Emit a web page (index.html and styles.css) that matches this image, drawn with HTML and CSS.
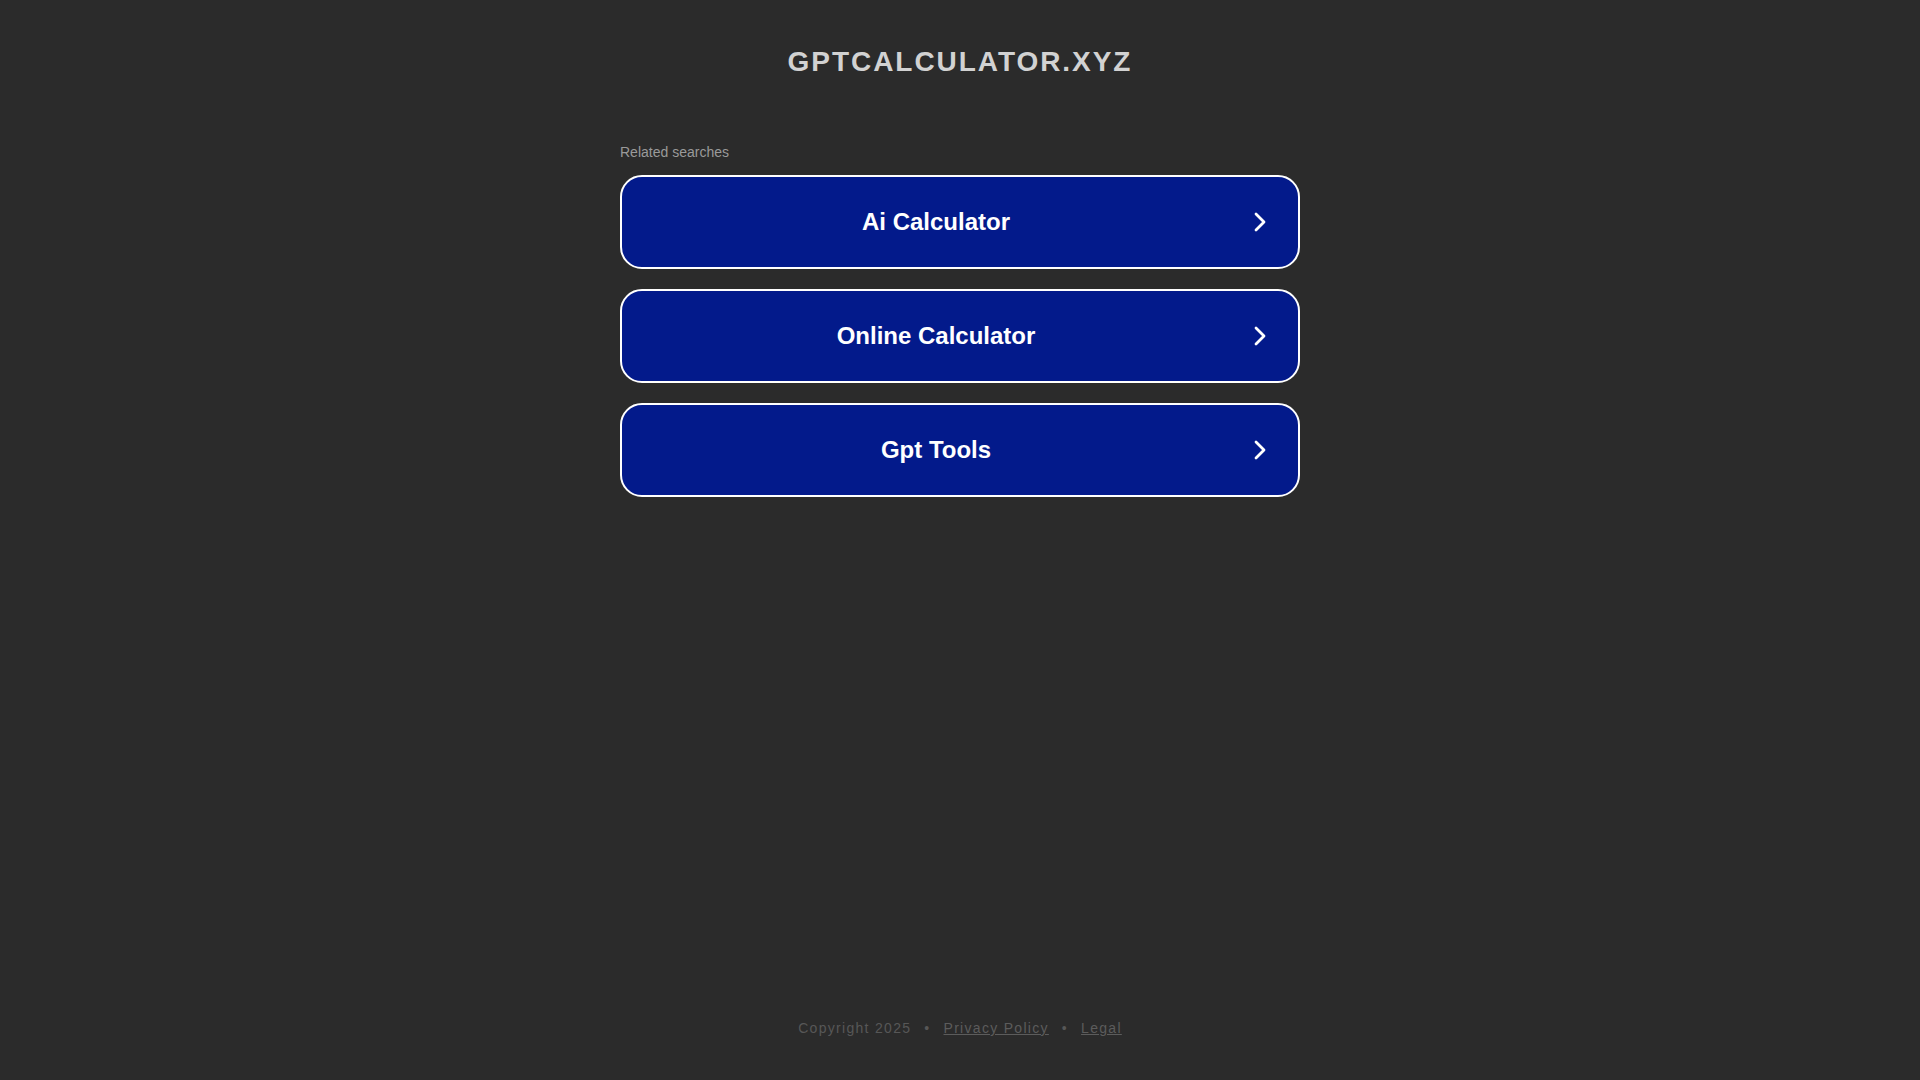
FILE: index.html
```html
<!DOCTYPE html>
<html lang="en">
<head>
<meta charset="utf-8">
<title>gptcalculator.xyz</title>
<link rel="stylesheet" href="styles.css">
</head>
<body>
<div class="page">
  <header class="header">
    <h1 class="domain">GPTCALCULATOR.XYZ</h1>
  </header>
  <main class="content">
    <div class="related-label">Related searches</div>
    <ul class="links">
      <li><a class="link" href="#"><span class="link-text">Ai Calculator</span><svg class="chev" viewBox="0 0 12 20" width="12" height="20" aria-hidden="true"><path d="M2 2 L10 10 L2 18" fill="none" stroke="#fff" stroke-width="2.8" stroke-linecap="round" stroke-linejoin="round"/></svg></a></li>
      <li><a class="link" href="#"><span class="link-text">Online Calculator</span><svg class="chev" viewBox="0 0 12 20" width="12" height="20" aria-hidden="true"><path d="M2 2 L10 10 L2 18" fill="none" stroke="#fff" stroke-width="2.8" stroke-linecap="round" stroke-linejoin="round"/></svg></a></li>
      <li><a class="link" href="#"><span class="link-text">Gpt Tools</span><svg class="chev" viewBox="0 0 12 20" width="12" height="20" aria-hidden="true"><path d="M2 2 L10 10 L2 18" fill="none" stroke="#fff" stroke-width="2.8" stroke-linecap="round" stroke-linejoin="round"/></svg></a></li>
    </ul>
  </main>
  <footer class="footer">
    <span>Copyright 2025</span><span class="sep">•</span><a href="#" class="flink">Privacy Policy</a><span class="sep">•</span><a href="#" class="flink">Legal</a>
  </footer>
</div>
</body>
</html>
```

FILE: styles.css
```css
html, body {
  margin: 0;
  padding: 0;
  background: #2b2b2b;
}

body {
  font-family: "Liberation Sans", Arial, Helvetica, sans-serif;
}

.page {
  min-height: 100vh;
  display: flex;
  flex-direction: column;
  align-items: center;
  box-sizing: border-box;
}

.header {
  padding-top: 46px;
}

.domain {
  margin: 0;
  font-size: 28px;
  line-height: 32px;
  font-weight: 700;
  letter-spacing: 1.95px;
  color: #d2d2d2;
  text-align: center;
}

.content {
  width: 680px;
  margin-top: 66px;
}

.related-label {
  font-size: 14px;
  line-height: 16px;
  color: #9a9a9a;
  margin-bottom: 15px;
}

.links {
  list-style: none;
  margin: 0;
  padding: 0;
  display: flex;
  flex-direction: column;
  gap: 20px;
}

.link {
  display: flex;
  align-items: center;
  box-sizing: border-box;
  height: 94px;
  background: #031a8b;
  border: 2px solid #ffffff;
  border-radius: 22px;
  padding: 0 32px 0 0;
  text-decoration: none;
  color: #ffffff;
}

.link-text {
  flex: 1;
  text-align: center;
  font-size: 24px;
  font-weight: 700;
  line-height: 28px;
}

.chev {
  display: block;
  margin-left: 4px;
}

.footer {
  margin-top: auto;
  padding-bottom: 44px;
  font-size: 14px;
  line-height: 16px;
  letter-spacing: 1.3px;
  color: #575757;
  display: flex;
  align-items: center;
}

.sep {
  margin: 0 13px;
}

.flink {
  color: #5c5c5c;
  text-decoration: underline;
}
```
